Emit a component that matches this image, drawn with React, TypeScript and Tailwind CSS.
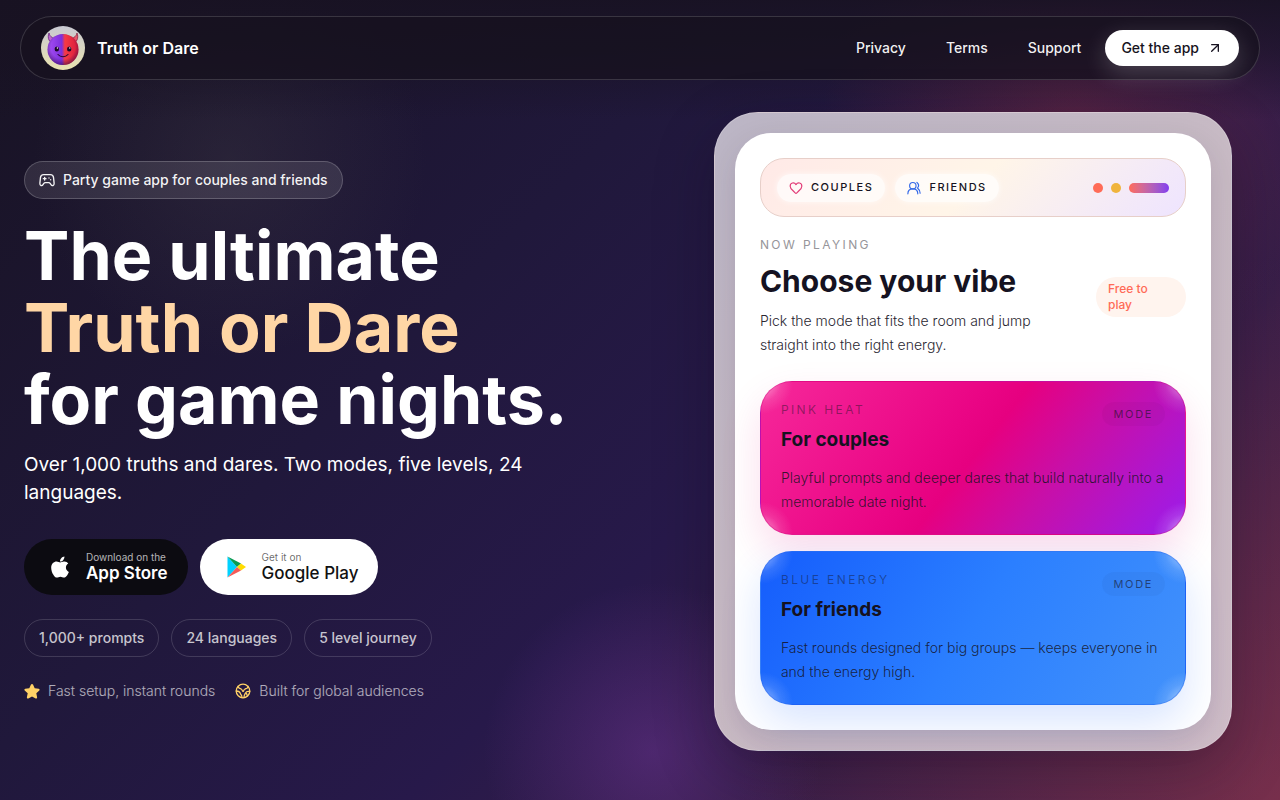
import React from 'react';
import { ArrowUpRight } from 'lucide-react';
import { FaApple } from 'react-icons/fa';

interface Mode {
  label: string;
  title: string;
  text: string;
  className: string;
}

const navLinks = ['Privacy', 'Terms', 'Support'];

const stats = ['1,000+ prompts', '24 languages', '5 level journey'];

const modes: Mode[] = [
  {
    label: 'Pink heat',
    title: 'For couples',
    text: 'Playful prompts and deeper dares that build naturally into a memorable date night.',
    className:
      'border-[#d0087c]/40 bg-[radial-gradient(circle_at_0_0,rgba(255,255,255,0.6),rgba(255,255,255,0.12)_20px,transparent_32px),radial-gradient(circle_at_100%_0,rgba(255,255,255,0.6),rgba(255,255,255,0.12)_20px,transparent_32px),radial-gradient(circle_at_0_100%,rgba(255,255,255,0.6),rgba(255,255,255,0.12)_20px,transparent_32px),radial-gradient(circle_at_100%_100%,rgba(255,255,255,0.6),rgba(255,255,255,0.12)_20px,transparent_32px),linear-gradient(128deg,#f6289a_0%,#ea0585_42%,#e60080_50%,#c80fa8_68%,#9b1cec_100%)] shadow-[0_18px_40px_rgba(230,0,118,0.14)]',
  },
  {
    label: 'Blue energy',
    title: 'For friends',
    text: 'Fast rounds designed for big groups — keeps everyone in and the energy high.',
    className:
      'border-[#2563eb]/40 bg-[radial-gradient(circle_at_0_0,rgba(255,255,255,0.6),rgba(255,255,255,0.12)_20px,transparent_32px),radial-gradient(circle_at_100%_0,rgba(255,255,255,0.6),rgba(255,255,255,0.12)_20px,transparent_32px),radial-gradient(circle_at_0_100%,rgba(255,255,255,0.6),rgba(255,255,255,0.12)_20px,transparent_32px),radial-gradient(circle_at_100%_100%,rgba(255,255,255,0.6),rgba(255,255,255,0.12)_20px,transparent_32px),linear-gradient(122deg,#155dfc_0%,#2b7fff_50%,#4392fb_100%)] shadow-[0_18px_40px_rgba(21,93,252,0.16)]',
  },
];

const Logo: React.FC = () => (
  <svg viewBox="0 0 44 44" className="size-11" aria-hidden="true">
    <defs>
      <linearGradient id="plate" x1="0" y1="0" x2="0" y2="1">
        <stop offset="0" stopColor="#c9c9d2" />
        <stop offset="1" stopColor="#e9e2b0" />
      </linearGradient>
      <linearGradient id="face" x1="0" y1="0" x2="1" y2="0">
        <stop offset="0" stopColor="#a750f5" />
        <stop offset="0.46" stopColor="#7d2fdc" />
        <stop offset="0.56" stopColor="#f53a44" />
        <stop offset="1" stopColor="#d81c3c" />
      </linearGradient>
      <radialGradient id="shade" cx="0.5" cy="0.42" r="0.6">
        <stop offset="0.65" stopColor="#2a0648" stopOpacity="0" />
        <stop offset="1" stopColor="#2a0648" stopOpacity="0.6" />
      </radialGradient>
    </defs>
    <circle cx="22" cy="22" r="22" fill="url(#plate)" />
    <path d="M8 7c-2 5 0 10 6 11l4-5C12 13 9 11 8 7Z" fill="#c065d0" stroke="#5a1a73" strokeWidth="0.7" />
    <path d="M36 7c2 5 0 10-6 11l-4-5c6 0 9-2 10-6Z" fill="#e8566a" stroke="#7a1a38" strokeWidth="0.7" />
    <circle cx="22" cy="23.500" r="15.500" fill="url(#face)" />
    <circle cx="22" cy="23.500" r="15.500" fill="url(#shade)" />
    <ellipse cx="15.800" cy="23" rx="2.200" ry="2.500" fill="#1c0827" />
    <ellipse cx="28.200" cy="23" rx="2.200" ry="2.500" fill="#1c0827" />
    <circle cx="16.400" cy="22" r="0.700" fill="#fff" />
    <circle cx="28.800" cy="22" r="0.700" fill="#fff" />
    <path d="M17 28.500c2.500 3 7.500 3 10 0" fill="none" stroke="#28082f" strokeWidth="1.100" strokeLinecap="round" />
  </svg>
);

const GamepadIcon: React.FC = () => (
  <svg viewBox="0 0 24 24" className="size-4" fill="none" stroke="currentColor" strokeWidth="2" strokeLinecap="round" strokeLinejoin="round" aria-hidden="true">
    <path d="M7 4h10c3 0 4.500 1.500 4.800 4.500l.9 8.500c.3 3.500-3.200 4.500-4.700 2l-1-1.500c-.7-1-1.500-1.500-2.500-1.500h-5c-1 0-1.800.5-2.500 1.500L6 19c-1.500 2.500-5 1.500-4.700-2l.9-8.500C2.500 5.500 4 4 7 4Z" />
    <path d="M8.500 8v4M6.500 10h4M15 9v.1M17.500 11.500v.1" />
  </svg>
);

const HeartIcon: React.FC = () => (
  <svg viewBox="0 0 24 24" className="size-[14px] text-[#e23b77]" fill="none" stroke="currentColor" strokeWidth="2" strokeLinejoin="round" aria-hidden="true">
    <path d="M22 8.900c0 3-2.500 5.600-5 7.800l-3.500 3.600c-1 1-2 1-3 0L7 16.700C4.500 14.500 2 11.900 2 8.900 2 2.700 9 1.500 12 6.200 15 1.500 22 2.700 22 8.900Z" />
  </svg>
);

const FriendsIcon: React.FC = () => (
  <svg viewBox="0 0 24 24" className="size-[14px] text-[#3469e8]" fill="none" stroke="currentColor" strokeWidth="2" strokeLinecap="round" aria-hidden="true">
    <circle cx="10" cy="8" r="5.500" />
    <path d="M1.500 22c0-4.500 3-8.500 8.500-8.500s8.500 4 8.500 8.500M17 2.500c3 2.500 3.500 6.500 1 9.500 3 2.500 4.500 5.500 4.500 9" />
  </svg>
);

const PlayStoreIcon: React.FC = () => (
  <svg viewBox="0 0 24 24" className="size-6" aria-hidden="true">
    <path d="M3.500 1.500v21L13 12Z" fill="#00d2ff" />
    <path d="M3.500 1.500 17 8.600 13 12Z" fill="#079b52" />
    <path d="M17 8.600 22 12l-5 3.400-4-3.400Z" fill="#ffdc00" />
    <path d="M3.500 22.500 13 12l4 3.400Z" fill="#f45b58" />
  </svg>
);

const StarIcon: React.FC = () => (
  <svg viewBox="0 0 16 16" className="size-4 text-[#ffd166]" fill="currentColor" aria-hidden="true">
    <path d="M7 1.500c.4-.8 1.600-.8 2 0l1.700 3.700 4 .5c.9.100 1.200 1.200.6 1.800l-3 2.800.8 4c.2.900-.7 1.500-1.500 1.100L8 13.500l-3.600 1.900c-.8.400-1.700-.2-1.500-1.100l.8-4-3-2.800c-.6-.6-.3-1.700.6-1.800l4-.5Z" />
  </svg>
);

const GlobeIcon: React.FC = () => (
  <svg viewBox="0 0 16 16" className="size-4 text-[#ffd166]" fill="none" stroke="currentColor" strokeWidth="1.300" strokeLinecap="round" strokeLinejoin="round" aria-hidden="true">
    <circle cx="8" cy="8" r="6.800" />
    <path d="M3 3.500c.5 2 2 2.200 3.200 2.500C7.500 6.500 7 8 8 8.500c1-.5.500-2 2-2.500 1.500-.3 3-.8 3.200-2.500M1.300 8c2 .2 3.500.8 4 2.300.3 1.500 1.700 1.700 1.700 4.200M14.700 8.500c-2-.5-3.500 0-4.200 1.500-.6 1.300-1.500 2-1.500 4.500M11.500 10.500l1 2.500" />
  </svg>
);

const App: React.FC = () => {
  return (
    <div className="min-h-screen overflow-hidden bg-[linear-gradient(180deg,rgba(24,18,34,0.9)_0,rgba(24,18,34,0.6)_50px,transparent_120px),radial-gradient(circle_at_18%_20%,rgba(70,65,75,0.3),transparent_16%),radial-gradient(circle_at_51%_94%,rgba(124,58,170,0.38),transparent_17%),radial-gradient(circle_at_84%_16%,rgba(180,55,65,0.36),transparent_20%),radial-gradient(circle_at_100%_100%,rgba(190,65,85,0.36),transparent_36%),linear-gradient(135deg,#181323_0%,#20183b_36%,#27194a_58%,#4f2547_100%)] font-['Inter',sans-serif] text-white">
      <header className="px-5 pt-4">
        <div className="flex h-16 items-center justify-between rounded-full border border-white/15 bg-[#17111f]/75 px-5">
          <a href="#home" className="flex items-center gap-3 font-semibold">
            <Logo />
            <span className="text-base">Truth or Dare</span>
          </a>
          <nav className="flex items-center gap-6 text-sm font-medium">
            <div className="flex gap-10">
              {navLinks.map((link) => (
                <a key={link} href={`#${link.toLowerCase()}`} className="text-white/95">
                  {link}
                </a>
              ))}
            </div>
            <a href="#download" className="flex h-9 items-center gap-2 rounded-full bg-white px-4 text-[#171321] shadow-[0_8px_24px_rgba(255,255,255,0.2)]">
              Get the app
              <ArrowUpRight className="size-4" strokeWidth={2} />
            </a>
          </nav>
        </div>
      </header>

      <main className="grid grid-cols-[1fr_44%] items-center px-6 pt-8 pb-12">
        {/* Hero copy */}
        <section className="pb-0.5">
          <div className="inline-flex h-[38px] items-center gap-2 rounded-full border border-white/20 bg-white/10 px-[14px] text-sm font-medium text-white/95">
            <GamepadIcon />
            Party game app for couples and friends
          </div>
          <h1 className="mt-5 text-[68px] leading-[72px] font-bold">
            The ultimate
            <span className="block text-[#ffd6a5]">Truth or Dare</span>
            for game nights.
          </h1>
          <p className="mt-4 max-w-[520px] text-[19px] leading-7">
            Over 1,000 truths and dares. Two modes, five levels, 24 languages.
          </p>

          <div className="mt-8 flex gap-3">
            <a href="#app-store" className="flex h-14 items-center gap-[14px] rounded-full bg-[#0c0b11] pr-5 pl-6">
              <FaApple className="size-6" />
              <span>
                <span className="block text-[10px] leading-3 text-white/70">Download on the</span>
                <span className="block text-[17px] leading-5 font-semibold">App Store</span>
              </span>
            </a>
            <a href="#google-play" className="flex h-14 items-center gap-[14px] rounded-full bg-white pr-5 pl-6 text-[#111]">
              <PlayStoreIcon />
              <span>
                <span className="block text-[10px] leading-3 text-black/60">Get it on</span>
                <span className="block text-[17px] leading-5 font-medium">Google Play</span>
              </span>
            </a>
          </div>

          <ul className="mt-6 flex gap-3 text-sm font-medium text-white/75">
            {stats.map((stat) => (
              <li key={stat} className="flex h-[38px] items-center rounded-full border border-white/15 px-[14px]">
                {stat}
              </li>
            ))}
          </ul>

          <div className="mt-6 flex gap-5 text-sm leading-5 font-light text-white/65">
            <span className="flex items-center gap-2">
              <StarIcon />
              Fast setup, instant rounds
            </span>
            <span className="flex items-center gap-2">
              <GlobeIcon />
              Built for global audiences
            </span>
          </div>
        </section>

        {/* Device preview */}
        <section className="mr-6 rounded-[44px] border border-white/20 bg-[linear-gradient(135deg,#bbb5c5,#c8bac4_50%,#cfbdc8)] p-5 text-[#151221] shadow-[0_20px_60px_rgba(18,10,25,0.3)]">
          <div className="rounded-[36px] bg-white px-[25px] py-[25px] shadow-[0_10px_30px_rgba(30,20,50,0.12)]">
            <div className="flex h-[59px] items-center justify-between rounded-[24px] border border-[#e7cfc9] bg-[linear-gradient(135deg,#ffe9e7,#fff5e8_50%,#eee4ff)] px-4">
              <div className="flex gap-[10px] text-[11px] font-medium tracking-[0.14em] uppercase">
                <span className="flex h-7 items-center gap-2 rounded-full bg-white/70 px-3 shadow-[0_0_6px_rgba(255,255,255,0.7)]">
                  <HeartIcon />
                  Couples
                </span>
                <span className="flex h-7 items-center gap-2 rounded-full bg-white/70 px-3 shadow-[0_0_6px_rgba(255,255,255,0.7)]">
                  <FriendsIcon />
                  Friends
                </span>
              </div>
              <div className="flex items-center gap-2">
                <span className="size-[10px] rounded-full bg-[#ff6b57]" />
                <span className="size-[10px] rounded-full bg-[#f0b43c]" />
                <span className="h-[10px] w-10 rounded-full bg-linear-to-r from-[#ff6b57] to-[#843bef]" />
              </div>
            </div>

            <div className="mt-5 flex items-center justify-between">
              <div>
                <p className="text-xs leading-4 tracking-[0.2em] text-[#96959a] uppercase">Now playing</p>
                <h2 className="mt-2 text-[30px] leading-10 font-bold">Choose your vibe</h2>
                <p className="mt-2 max-w-[290px] text-sm leading-6 font-light text-[#2a2731]">
                  Pick the mode that fits the room and jump straight into the right energy.
                </p>
              </div>
              <span className="w-[90px] rounded-[20px] bg-[#fff4ee] px-3 py-1 text-xs leading-4 font-medium text-[#ff6b57]">
                Free to play
              </span>
            </div>

            <div className="mt-6 flex flex-col gap-4">
              {modes.map((mode) => (
                <article key={mode.title} className={`rounded-[32px] border py-5 pr-4 pl-5 ${mode.className}`}>
                  <div className="flex items-start justify-between pr-1">
                    <div>
                      <p className="text-xs leading-4 tracking-[0.2em] text-[#151221]/45 uppercase">{mode.label}</p>
                      <h3 className="mt-2 text-[19px] leading-7 font-bold">{mode.title}</h3>
                    </div>
                    <span className="rounded-full bg-black/3 px-3 py-1 text-[11px] leading-4 tracking-[0.15em] text-[#151221]/60 uppercase">
                      Mode
                    </span>
                  </div>
                  <p className="mt-3 text-sm leading-6 font-light text-[#151221]/85">{mode.text}</p>
                </article>
              ))}
            </div>
          </div>
        </section>
      </main>
    </div>
  );
};

export default App;
